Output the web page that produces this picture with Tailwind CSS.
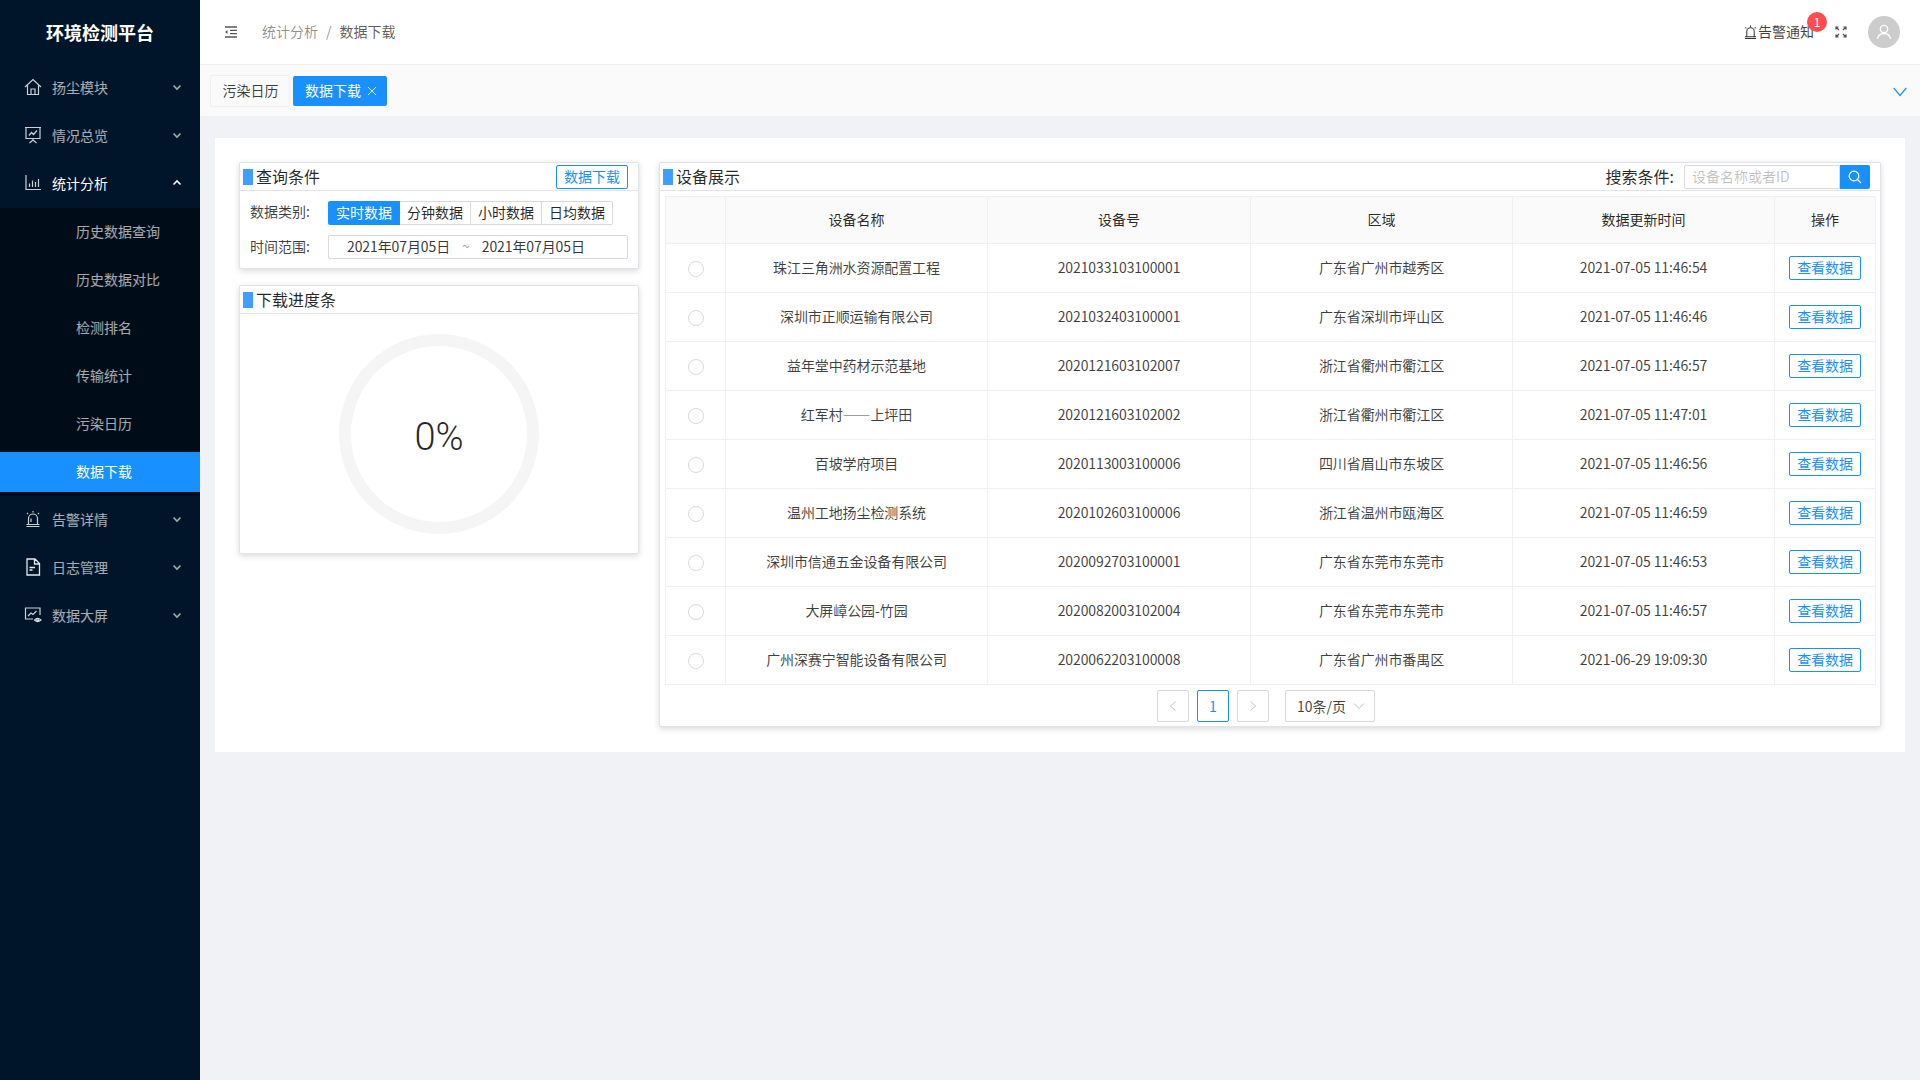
<!DOCTYPE html>
<html lang="zh">
<head>
<meta charset="utf-8">
<title>环境检测平台</title>
<script src="https://cdn.jsdelivr.net/npm/@tailwindcss/browser@4"></script>
</head>
<body class="m-0 bg-[#f0f2f5]">
<div class="flex h-[1080px] w-[1920px] overflow-hidden font-['Noto_Sans_CJK_SC','Noto_Sans',sans-serif] text-[14px] text-black/85">
  <aside class="flex h-full w-[200px] shrink-0 flex-col bg-[#001529] text-white/65">
    <div class="flex h-[64px] shrink-0 items-center justify-center text-[18px] font-bold leading-none text-white">环境检测平台</div>
    <div class="flex h-[48px] items-center pb-[2px] pl-[24px] pr-[18px]">
      <svg class="h-[18px] w-[18px] shrink-0 text-white/80" viewBox="0 0 18 18" fill="none" stroke="currentColor" stroke-width="1.2"><path d="M1 9 9 1.5 17 9M3.5 7.5V16.5H14.5V7.5M7 16.5V11H11V16.5"/></svg>
      <span class="ml-[10px] flex-1">扬尘模块</span>
      <svg class="h-[10px] w-[10px]" viewBox="0 0 10 10" fill="none" stroke="currentColor" stroke-width="1.6"><path d="M1.5 3.5 5 7 8.5 3.5"/></svg>
    </div>
    <div class="flex h-[48px] items-center pb-[2px] pl-[24px] pr-[18px]">
      <svg class="h-[18px] w-[18px] shrink-0 text-white/80" viewBox="0 0 18 18" fill="none" stroke="currentColor" stroke-width="1.2"><path d="M1 1.5H17M2 1.5V12.5H16V1.5M5 9.5 7.5 6.5 9.5 8.5 13 4.5M9 12.5V14M5.5 17 9 14 12.5 17"/></svg>
      <span class="ml-[10px] flex-1">情况总览</span>
      <svg class="h-[10px] w-[10px]" viewBox="0 0 10 10" fill="none" stroke="currentColor" stroke-width="1.6"><path d="M1.5 3.5 5 7 8.5 3.5"/></svg>
    </div>
    <div class="flex h-[48px] items-center pb-[2px] pl-[24px] pr-[18px] text-white">
      <svg class="h-[18px] w-[18px] shrink-0 text-white/80" viewBox="0 0 18 18" fill="none" stroke="currentColor" stroke-width="1.2"><path d="M2 1V15.5H17M5.5 13V9.5M8.5 13V6.5M11.5 13V8M14.5 13V5"/></svg>
      <span class="ml-[10px] flex-1">统计分析</span>
      <svg class="h-[10px] w-[10px]" viewBox="0 0 10 10" fill="none" stroke="currentColor" stroke-width="1.6"><path d="M1.5 6.5 5 3 8.5 6.5"/></svg>
    </div>
    <div class="flex flex-col bg-[#000c17] pb-[4px] pt-[4px]">
      <div class="mb-[8px] flex h-[40px] items-center pb-[2px] pl-[76px]">历史数据查询</div>
      <div class="mb-[8px] flex h-[40px] items-center pb-[2px] pl-[76px]">历史数据对比</div>
      <div class="mb-[8px] flex h-[40px] items-center pb-[2px] pl-[76px]">检测排名</div>
      <div class="mb-[8px] flex h-[40px] items-center pb-[2px] pl-[76px]">传输统计</div>
      <div class="mb-[8px] flex h-[40px] items-center pb-[2px] pl-[76px]">污染日历</div>
      <div class="flex h-[40px] items-center bg-[#1890ff] pb-[2px] pl-[76px] text-white">数据下载</div>
    </div>
    <div class="flex h-[48px] items-center pb-[2px] pl-[24px] pr-[18px]">
      <svg class="h-[18px] w-[18px] shrink-0 text-white/80" viewBox="0 0 18 18" fill="none" stroke="currentColor" stroke-width="1.2"><path d="M4.5 14V8.5A4.5 4.5 0 0 1 13.5 8.5V14M2.5 14.5H15.5M2.5 16.5H15.5M9 1V2.5M3 3 4 4M15 3 14 4M7 12V8.5"/></svg>
      <span class="ml-[10px] flex-1">告警详情</span>
      <svg class="h-[10px] w-[10px]" viewBox="0 0 10 10" fill="none" stroke="currentColor" stroke-width="1.6"><path d="M1.5 3.5 5 7 8.5 3.5"/></svg>
    </div>
    <div class="flex h-[48px] items-center pb-[2px] pl-[24px] pr-[18px]">
      <svg class="h-[18px] w-[18px] shrink-0 text-white/90" viewBox="0 0 18 18" fill="none" stroke="currentColor" stroke-width="1.3"><path d="M3 1H11L15.5 5.5V17H3ZM10.5 1V6H15.5M5.5 9.5H11M5.5 12H8.5"/></svg>
      <span class="ml-[10px] flex-1">日志管理</span>
      <svg class="h-[10px] w-[10px]" viewBox="0 0 10 10" fill="none" stroke="currentColor" stroke-width="1.6"><path d="M1.5 3.5 5 7 8.5 3.5"/></svg>
    </div>
    <div class="flex h-[48px] items-center pb-[2px] pl-[24px] pr-[18px]">
      <svg class="h-[18px] w-[18px] shrink-0 text-white/80" viewBox="0 0 18 18" fill="none" stroke="currentColor" stroke-width="1.2"><path d="M9 13H1.5V2H16V9M4 10 7 7 9 8.5 12.5 5M10.5 14Q13.5 10.5 17 14Q13.5 17 10.5 14Z"/><circle cx="13.7" cy="13.8" r="1"/></svg>
      <span class="ml-[10px] flex-1">数据大屏</span>
      <svg class="h-[10px] w-[10px]" viewBox="0 0 10 10" fill="none" stroke="currentColor" stroke-width="1.6"><path d="M1.5 3.5 5 7 8.5 3.5"/></svg>
    </div>
  </aside>

  <div class="flex min-w-0 flex-1 flex-col">
    <header class="flex h-[65px] shrink-0 items-center border-b border-[#eeeeee] bg-white pl-[24px] pr-[20px]">
      <svg class="h-[14px] w-[14px] text-black/65" viewBox="0 0 14 14" fill="none" stroke="currentColor" stroke-width="1.3"><path d="M1 2H13M6 5.3H13M6 8.7H13M1 12H13"/><path d="M3.5 5 1 7 3.5 9Z" fill="currentColor" stroke="none"/></svg>
      <nav class="ml-[24px] flex items-center pb-[2px]">
        <span class="text-black/45">统计分析</span>
        <span class="mx-[8px] text-black/45">/</span>
        <span class="text-black/65">数据下载</span>
      </nav>
      <div class="ml-auto flex items-center">
        <svg class="h-[14px] w-[13px] text-black/80" viewBox="0 0 14 15" fill="none" stroke="currentColor" stroke-width="1.1"><path d="M3 12V7A4 4 0 0 1 11 7V12M1 12.5H13M1 14.5H13M7 .5V2M1.5 2.5 2.5 3.5M12.5 2.5 11.5 3.5"/></svg>
        <div class="relative ml-[1px] pb-[2px] leading-none text-black/75">告警通知
          <span class="absolute left-[49px] top-[-12px] flex h-[20px] w-[20px] items-center justify-center rounded-full bg-[#ff4d4f] text-[12px] text-white">1</span>
        </div>
        <svg class="ml-[21px] h-[12px] w-[12px] text-black/70" viewBox="0 0 12 12" fill="none" stroke="currentColor" stroke-width="1.2"><path d="M1 1 4 4M1 3.5V1H3.5M11 1 8 4M8.5 1H11V3.5M1 11 4 8M1 8.5V11H3.5M11 11 8 8M11 8.5V11H8.5"/></svg>
        <div class="ml-[21px] flex h-[32px] w-[32px] items-center justify-center rounded-full bg-[#cccccc]">
          <svg class="h-[16px] w-[16px] text-white" viewBox="0 0 16 16" fill="none" stroke="currentColor" stroke-width="1.3"><circle cx="8" cy="5" r="3.7"/><path d="M1.5 15C2 11.5 4.5 9.5 8 9.5S14 11.5 14.5 15"/></svg>
        </div>
      </div>
    </header>

    <div class="flex h-[51px] shrink-0 items-center bg-[#fafafa] pl-[10px] pr-[13px]">
      <div class="flex h-[32px] w-[80px] items-center justify-center rounded-[2px] border border-[#f0f0f0] bg-[#fafafa] pl-[1px] text-black/75">污染日历</div>
      <div class="ml-[3px] flex h-[30px] w-[94px] items-center rounded-[2px] bg-[#1890ff] pl-[12px] text-white">
        <span>数据下载</span>
        <svg class="ml-[6px] h-[10px] w-[10px] text-white/85" viewBox="0 0 10 10" fill="none" stroke="currentColor" stroke-width="1"><path d="M1 1 9 9M9 1 1 9"/></svg>
      </div>
      <svg class="ml-auto mt-[3px] h-[10px] w-[14px] text-[#1890ff]" viewBox="0 0 14 10" fill="none" stroke="currentColor" stroke-width="1.2"><path d="M.7 1 7 8.5 13.3 1"/></svg>
    </div>

    <main class="flex-1 px-[15px] pt-[22px]">
      <div class="flex h-[614px] gap-[20px] bg-white px-[24px] pt-[24px]">
        <div class="flex w-[400px] shrink-0 flex-col gap-[16px]">
          <section class="h-[107px] rounded-[2px] border border-[#e2e2e8] bg-white shadow-[0_2px_6px_rgba(0,0,0,0.15)]">
            <div class="flex h-[28px] items-center border-b border-[#e2e2e8] pl-[3px] pr-[10px]">
              <span class="h-[16px] w-[10px] bg-[#409eff]"></span>
              <span class="ml-[3px] pb-[2px] text-[16px] text-black/85">查询条件</span>
              <span class="ml-auto flex h-[24px] w-[72px] items-center justify-center rounded-[2px] border border-[#1890ff] pb-[1px] text-[#1890ff]">数据下载</span>
            </div>
            <div class="flex h-[35px] items-center pl-[10px] pt-[8px]">
              <span class="w-[78px] pb-[2px] text-black/75">数据类别:</span>
              <div class="flex h-[24px] items-stretch">
                <span class="flex w-[72px] items-center justify-center rounded-l-[2px] bg-[#1890ff] text-white">实时数据</span>
                <span class="flex w-[71px] items-center justify-center border-y border-r border-[#d9d9d9]">分钟数据</span>
                <span class="flex w-[71px] items-center justify-center border-y border-r border-[#d9d9d9]">小时数据</span>
                <span class="flex w-[71px] items-center justify-center rounded-r-[2px] border-y border-r border-[#d9d9d9]">日均数据</span>
              </div>
            </div>
            <div class="flex h-[34px] items-center pl-[10px] pr-[10px] pt-[8px]">
              <span class="w-[78px] pb-[2px] text-black/75">时间范围:</span>
              <div class="flex h-[24px] flex-1 items-center rounded-[2px] border border-[#d9d9d9] pb-[1px] pl-[18px] text-black/80 tracking-[-0.1px]">
                <span>2021年07月05日</span>
                <span class="ml-[12px] text-black/40">~</span>
                <span class="ml-[12px]">2021年07月05日</span>
              </div>
            </div>
          </section>
          <section class="h-[269px] rounded-[2px] border border-[#e2e2e8] bg-white shadow-[0_2px_6px_rgba(0,0,0,0.15)]">
            <div class="flex h-[28px] items-center border-b border-[#e2e2e8] pl-[3px]">
              <span class="h-[16px] w-[10px] bg-[#409eff]"></span>
              <span class="ml-[3px] pb-[2px] text-[16px] text-black/85">下载进度条</span>
            </div>
            <div class="flex justify-center pt-[20px]">
              <div class="flex h-[200px] w-[200px] items-center justify-center rounded-full border-[12px] border-[#f5f5f5] pt-[5px] font-['Roboto',sans-serif] text-[38px] font-light leading-none text-black/85">0%</div>
            </div>
          </section>
        </div>

        <section class="h-[565px] min-w-0 flex-1 rounded-[2px] border border-[#e2e2e8] bg-white shadow-[0_2px_6px_rgba(0,0,0,0.15)]">
          <div class="flex h-[28px] items-center border-b border-[#e2e2e8] pl-[3px] pr-[10px]">
            <span class="h-[16px] w-[10px] bg-[#409eff]"></span>
            <span class="ml-[3px] pb-[2px] text-[16px] text-black/85">设备展示</span>
            <span class="ml-auto pb-[2px] text-[16px] text-black/85">搜索条件:</span>
            <div class="ml-[10px] flex h-[24px] w-[186px]">
              <span class="flex flex-1 items-center rounded-l-[2px] border border-[#d9d9d9] pb-[1px] pl-[7px] text-black/25">设备名称或者ID</span>
              <span class="flex w-[30px] items-center justify-center rounded-r-[2px] bg-[#1890ff]">
                <svg class="h-[14px] w-[14px] text-white" viewBox="0 0 14 14" fill="none" stroke="currentColor" stroke-width="1.3"><circle cx="6" cy="6" r="4.8"/><path d="M9.5 9.5 13 13"/></svg>
              </span>
            </div>
          </div>
          <div class="mx-[5px] mt-[5px] border-l border-t border-[#f0f0f0] text-black/75">
            <div class="grid h-[47px] grid-cols-[60px_262px_263px_262px_262px_101px] bg-[#fafafa] text-center text-black/85 *:flex *:items-center *:justify-center *:border-b *:border-r *:border-[#f0f0f0] *:pb-[2px]">
              <div></div><div>设备名称</div><div>设备号</div><div>区域</div><div>数据更新时间</div><div>操作</div>
            </div>
            <div class="grid h-[49px] grid-cols-[60px_262px_263px_262px_262px_101px] tracking-[-0.1px] *:flex *:items-center *:justify-center *:border-b *:border-r *:border-[#f0f0f0] *:not-first:not-last:pb-[2px]">
              <div class="pt-[1px]"><span class="h-[16px] w-[16px] rounded-full border border-[#d9d9d9]"></span></div><div>珠江三角洲水资源配置工程</div><div>2021033103100001</div><div>广东省广州市越秀区</div><div>2021-07-05 11:46:54</div><div><span class="flex h-[24px] w-[72px] items-center justify-center rounded-[2px] border border-[#1890ff] pb-[1px] text-[#1890ff]">查看数据</span></div>
            </div>
            <div class="grid h-[49px] grid-cols-[60px_262px_263px_262px_262px_101px] tracking-[-0.1px] *:flex *:items-center *:justify-center *:border-b *:border-r *:border-[#f0f0f0] *:not-first:not-last:pb-[2px]">
              <div class="pt-[1px]"><span class="h-[16px] w-[16px] rounded-full border border-[#d9d9d9]"></span></div><div>深圳市正顺运输有限公司</div><div>2021032403100001</div><div>广东省深圳市坪山区</div><div>2021-07-05 11:46:46</div><div><span class="flex h-[24px] w-[72px] items-center justify-center rounded-[2px] border border-[#1890ff] pb-[1px] text-[#1890ff]">查看数据</span></div>
            </div>
            <div class="grid h-[49px] grid-cols-[60px_262px_263px_262px_262px_101px] tracking-[-0.1px] *:flex *:items-center *:justify-center *:border-b *:border-r *:border-[#f0f0f0] *:not-first:not-last:pb-[2px]">
              <div class="pt-[1px]"><span class="h-[16px] w-[16px] rounded-full border border-[#d9d9d9]"></span></div><div>益年堂中药材示范基地</div><div>2020121603102007</div><div>浙江省衢州市衢江区</div><div>2021-07-05 11:46:57</div><div><span class="flex h-[24px] w-[72px] items-center justify-center rounded-[2px] border border-[#1890ff] pb-[1px] text-[#1890ff]">查看数据</span></div>
            </div>
            <div class="grid h-[49px] grid-cols-[60px_262px_263px_262px_262px_101px] tracking-[-0.1px] *:flex *:items-center *:justify-center *:border-b *:border-r *:border-[#f0f0f0] *:not-first:not-last:pb-[2px]">
              <div class="pt-[1px]"><span class="h-[16px] w-[16px] rounded-full border border-[#d9d9d9]"></span></div><div>红军村——上坪田</div><div>2020121603102002</div><div>浙江省衢州市衢江区</div><div>2021-07-05 11:47:01</div><div><span class="flex h-[24px] w-[72px] items-center justify-center rounded-[2px] border border-[#1890ff] pb-[1px] text-[#1890ff]">查看数据</span></div>
            </div>
            <div class="grid h-[49px] grid-cols-[60px_262px_263px_262px_262px_101px] tracking-[-0.1px] *:flex *:items-center *:justify-center *:border-b *:border-r *:border-[#f0f0f0] *:not-first:not-last:pb-[2px]">
              <div class="pt-[1px]"><span class="h-[16px] w-[16px] rounded-full border border-[#d9d9d9]"></span></div><div>百坡学府项目</div><div>2020113003100006</div><div>四川省眉山市东坡区</div><div>2021-07-05 11:46:56</div><div><span class="flex h-[24px] w-[72px] items-center justify-center rounded-[2px] border border-[#1890ff] pb-[1px] text-[#1890ff]">查看数据</span></div>
            </div>
            <div class="grid h-[49px] grid-cols-[60px_262px_263px_262px_262px_101px] tracking-[-0.1px] *:flex *:items-center *:justify-center *:border-b *:border-r *:border-[#f0f0f0] *:not-first:not-last:pb-[2px]">
              <div class="pt-[1px]"><span class="h-[16px] w-[16px] rounded-full border border-[#d9d9d9]"></span></div><div>温州工地扬尘检测系统</div><div>2020102603100006</div><div>浙江省温州市瓯海区</div><div>2021-07-05 11:46:59</div><div><span class="flex h-[24px] w-[72px] items-center justify-center rounded-[2px] border border-[#1890ff] pb-[1px] text-[#1890ff]">查看数据</span></div>
            </div>
            <div class="grid h-[49px] grid-cols-[60px_262px_263px_262px_262px_101px] tracking-[-0.1px] *:flex *:items-center *:justify-center *:border-b *:border-r *:border-[#f0f0f0] *:not-first:not-last:pb-[2px]">
              <div class="pt-[1px]"><span class="h-[16px] w-[16px] rounded-full border border-[#d9d9d9]"></span></div><div>深圳市信通五金设备有限公司</div><div>2020092703100001</div><div>广东省东莞市东莞市</div><div>2021-07-05 11:46:53</div><div><span class="flex h-[24px] w-[72px] items-center justify-center rounded-[2px] border border-[#1890ff] pb-[1px] text-[#1890ff]">查看数据</span></div>
            </div>
            <div class="grid h-[49px] grid-cols-[60px_262px_263px_262px_262px_101px] tracking-[-0.1px] *:flex *:items-center *:justify-center *:border-b *:border-r *:border-[#f0f0f0] *:not-first:not-last:pb-[2px]">
              <div class="pt-[1px]"><span class="h-[16px] w-[16px] rounded-full border border-[#d9d9d9]"></span></div><div>大屏嶂公园-竹园</div><div>2020082003102004</div><div>广东省东莞市东莞市</div><div>2021-07-05 11:46:57</div><div><span class="flex h-[24px] w-[72px] items-center justify-center rounded-[2px] border border-[#1890ff] pb-[1px] text-[#1890ff]">查看数据</span></div>
            </div>
            <div class="grid h-[49px] grid-cols-[60px_262px_263px_262px_262px_101px] tracking-[-0.1px] *:flex *:items-center *:justify-center *:border-b *:border-r *:border-[#f0f0f0] *:not-first:not-last:pb-[2px]">
              <div class="pt-[1px]"><span class="h-[16px] w-[16px] rounded-full border border-[#d9d9d9]"></span></div><div>广州深赛宁智能设备有限公司</div><div>2020062203100008</div><div>广东省广州市番禺区</div><div>2021-06-29 19:09:30</div><div><span class="flex h-[24px] w-[72px] items-center justify-center rounded-[2px] border border-[#1890ff] pb-[1px] text-[#1890ff]">查看数据</span></div>
            </div>
          </div>
          <div class="mt-[5px] flex h-[32px] items-center pl-[497px]">
            <span class="flex h-[32px] w-[32px] items-center justify-center rounded-[2px] border border-[#d9d9d9] text-black/25">
              <svg class="h-[12px] w-[12px]" viewBox="0 0 12 12" fill="none" stroke="currentColor" stroke-width="1"><path d="M8.5 1.5 3.5 6 8.5 10.5"/></svg>
            </span>
            <span class="ml-[8px] flex h-[32px] w-[32px] items-center justify-center rounded-[2px] border border-[#1890ff] text-[#1890ff]">1</span>
            <span class="ml-[8px] flex h-[32px] w-[32px] items-center justify-center rounded-[2px] border border-[#d9d9d9] text-black/25">
              <svg class="h-[12px] w-[12px]" viewBox="0 0 12 12" fill="none" stroke="currentColor" stroke-width="1"><path d="M3.5 1.5 8.5 6 3.5 10.5"/></svg>
            </span>
            <span class="ml-[16px] flex h-[32px] w-[90px] items-center rounded-[2px] border border-[#d9d9d9] pl-[11px] text-black/75">10条/页
              <svg class="ml-[7px] h-[12px] w-[12px] text-black/25" viewBox="0 0 12 12" fill="none" stroke="currentColor" stroke-width="1"><path d="M1 3.5 6 8.5 11 3.5"/></svg>
            </span>
          </div>
        </section>
      </div>
    </main>
  </div>
</div>
</body>
</html>
